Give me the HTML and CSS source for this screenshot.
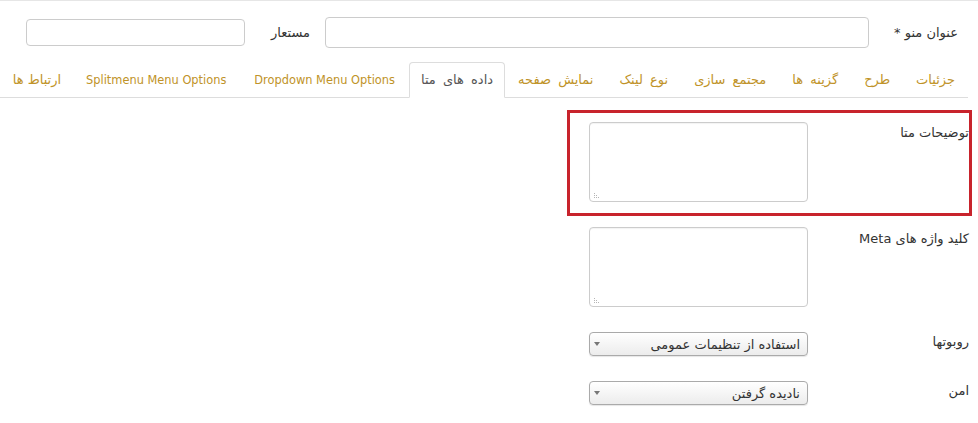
FILE: index.html
```html
<!DOCTYPE html>
<html lang="fa" dir="rtl">
<head>
    <meta charset="UTF-8">
    <title>ویرایش منو</title>
    <link rel="stylesheet" href="styles.css">
</head>
<body>

    <!-- Title row -->
    <div class="title-row">
        <label class="title-label">عنوان منو *</label>
        <input type="text" class="input-title">
        <label class="alias-label">مستعار</label>
        <input type="text" class="input-alias">
    </div>

    <!-- Tabs -->
    <ul class="tabs">
        <li><a href="#">جزئیات</a></li>
        <li><a href="#">طرح</a></li>
        <li><a href="#">گزینه ها</a></li>
        <li><a href="#">مجتمع سازی</a></li>
        <li><a href="#">نوع لینک</a></li>
        <li><a href="#">نمایش صفحه</a></li>
        <li class="active"><a href="#">داده های متا</a></li>
        <li><a href="#" class="en">Dropdown Menu Options</a></li>
        <li><a href="#" class="en">Splitmenu Menu Options</a></li>
        <li><a href="#">ارتباط ها</a></li>
    </ul>

    <!-- Meta data fields -->
    <div class="form">
        <div class="field highlight">
            <label class="field-label">توضیحات متا</label>
            <textarea class="field-area"></textarea>
        </div>
        <div class="field">
            <label class="field-label label-keys">کلید واژه های Meta</label>
            <textarea class="field-area"></textarea>
        </div>
        <div class="field">
            <label class="field-label label-select">روبوتها</label>
            <span class="select-wrap">
                <select class="field-select">
                    <option>استفاده از تنظیمات عمومی</option>
                </select>
            </span>
        </div>
        <div class="field">
            <label class="field-label label-select">امن</label>
            <span class="select-wrap">
                <select class="field-select">
                    <option>نادیده گرفتن</option>
                </select>
            </span>
        </div>
    </div>

</body>
</html>
```

FILE: styles.css
```css
* {
    margin: 0;
    padding: 0;
    box-sizing: border-box;
    font-family: Tahoma, "DejaVu Sans", sans-serif;
}

body {
    background-color: #ffffff;
    color: #333333;
    font-size: 13px;
    border-top: 1px solid #e6e6e6;
}

/* Title row */
.title-row {
    display: flex;
    align-items: center;
    padding: 15px 20px 0 0;
    height: 47px;
}

.title-label {
    margin-left: 24px;
    width: 65px;
    white-space: nowrap;
}

.input-title {
    width: 544px;
    height: 31px;
    border: 1px solid #cccccc;
    border-radius: 4px;
    margin-left: 15px;
}

.alias-label {
    width: 40px;
    margin-left: 25px;
}

.input-alias {
    width: 219px;
    height: 27px;
    border: 1px solid #cccccc;
    border-radius: 4px;
}

/* Tabs */
.tabs {
    list-style: none;
    display: flex;
    margin: 14px 10px 0 0;
    height: 36px;
    border-bottom: 1px solid #dddddd;
}

.tabs li {
    flex-shrink: 0;
}

.tabs li a {
    display: block;
    height: 36px;
    line-height: 34px;
    padding: 0 12px;
    color: #c09328;
    text-decoration: none;
    font-size: 13px;
    word-spacing: 3px;
    white-space: nowrap;
    border: 1px solid transparent;
    border-radius: 4px 4px 0 0;
}

.tabs li a.en {
    font-size: 11.4px;
    word-spacing: 0;
    padding: 0 13px;
}

.tabs li.active a {
    color: #555555;
    background-color: #ffffff;
    padding: 0 11px;
    border-color: #dddddd #dddddd transparent;
}

.tabs li:last-child a {
    padding: 0 10px 0 4px;
    word-spacing: 0;
}

/* Form rows */
.form {
    padding: 15px 9px 0 0;
}

.field {
    display: flex;
    width: 399px;
    margin-bottom: 14px;
}

.highlight {
    outline: 3px solid #c8232c;
    padding-top: 9px;
}

.field-label {
    width: 161px;
    padding-top: 3px;
    white-space: nowrap;
}

.label-keys {
    padding-top: 4px;
}

.label-select {
    padding-top: 2px;
}

.field-area {
    width: 219px;
    height: 80px;
    border: 1px solid #cccccc;
    border-radius: 4px;
    box-shadow: inset 0 1px 1px rgba(0, 0, 0, 0.05);
    margin-bottom: 11px;
    resize: none;
    /* dotted resize grip, bottom left */
    background:
        repeating-linear-gradient(to right, #b5b5b5 0 1px, transparent 1px 2px) left 4px bottom 3px / 6px 1px no-repeat,
        repeating-linear-gradient(to right, #b5b5b5 0 1px, transparent 1px 2px) left 4px bottom 5px / 4px 1px no-repeat,
        repeating-linear-gradient(to right, #b5b5b5 0 1px, transparent 1px 2px) left 4px bottom 7px / 2px 1px no-repeat,
        #ffffff;
}

.select-wrap {
    position: relative;
    display: block;
    margin-bottom: 11px;
}

.select-wrap::after {
    content: "";
    position: absolute;
    left: 5px;
    top: 10px;
    border-left: 3px solid transparent;
    border-right: 3px solid transparent;
    border-top: 4px solid #777777;
}

.field-select {
    appearance: none;
    -webkit-appearance: none;
    width: 219px;
    height: 24px;
    border: 1px solid #aaaaaa;
    border-radius: 4px;
    background: linear-gradient(#ffffff, #ececec);
    box-shadow: 0 1px 1px rgba(0, 0, 0, 0.1);
    color: #333333;
    font-size: 13px;
    padding: 0 7px 0 20px;
}
```
